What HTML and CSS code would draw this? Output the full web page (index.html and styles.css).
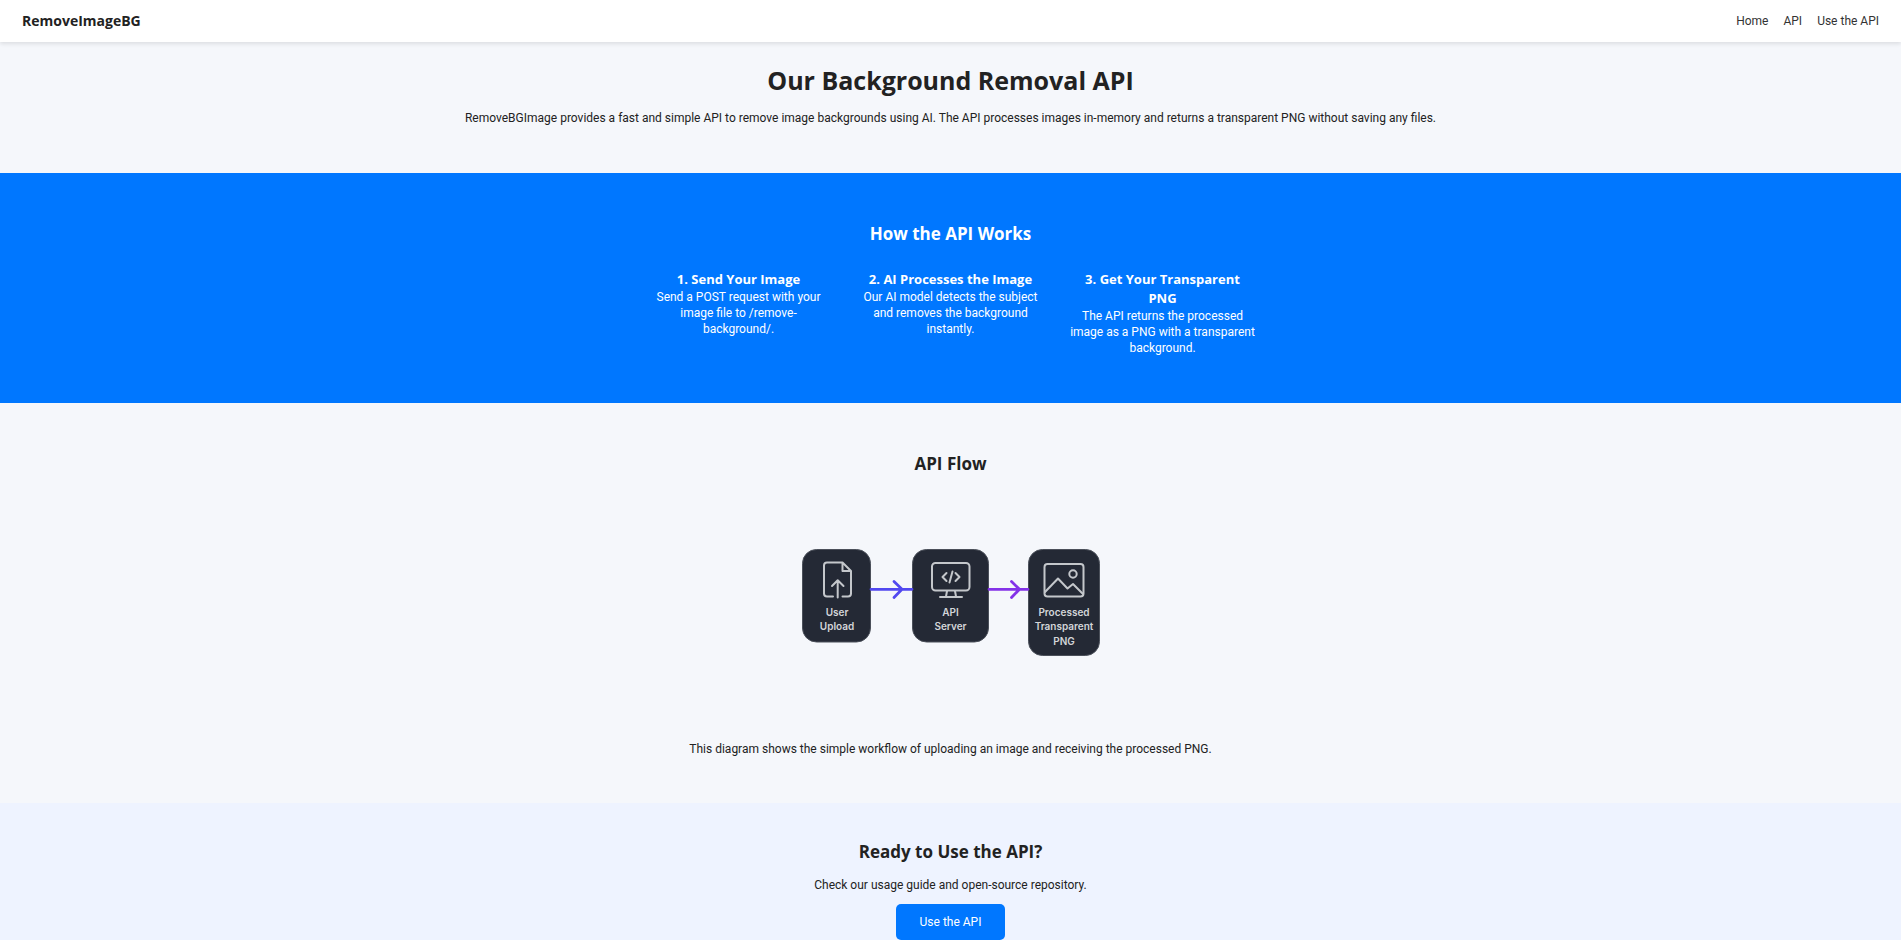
FILE: index.html
```html
<!DOCTYPE html>
<html lang="en">
<head>
<meta charset="utf-8">
<meta name="viewport" content="width=device-width, initial-scale=1">
<title>RemoveImageBG API</title>
<link rel="stylesheet" href="styles.css">
</head>
<body>
<header class="header">
  <div class="logo">RemoveImageBG</div>
  <nav class="nav">
    <a href="#">Home</a>
    <a href="#">API</a>
    <a href="#use">Use the API</a>
  </nav>
</header>
<main>
  <section class="hero">
    <h1>Our Background Removal API</h1>
    <p>RemoveBGImage provides a fast and simple API to remove image backgrounds using AI. The API processes images in-memory and returns a transparent PNG without saving any files.</p>
  </section>
  <section class="how">
    <h2>How the API Works</h2>
    <div class="steps">
      <div class="step">
        <h3>1. Send Your Image</h3>
        <p>Send a POST request with your image file to /remove-background/.</p>
      </div>
      <div class="step">
        <h3>2. AI Processes the Image</h3>
        <p>Our AI model detects the subject and removes the background instantly.</p>
      </div>
      <div class="step">
        <h3>3. Get Your Transparent PNG</h3>
        <p>The API returns the processed image as a PNG with a transparent background.</p>
      </div>
    </div>
  </section>
  <section class="flow">
    <h2>API Flow</h2>
    <svg class="diagram" viewBox="0 0 400 240" role="img" aria-label="API workflow diagram">
      <g class="box">
        <rect x="51.500" y="61.500" width="68" height="92.500" rx="14"/>
        <rect x="161.500" y="61.500" width="76" height="92.500" rx="14"/>
        <rect x="277.500" y="61.500" width="71" height="106" rx="14"/>
      </g>
      <g class="arrow arrow-blue">
        <path d="M120 101.300H161M143 93.500L151 101.300L143 109.500"/>
      </g>
      <g class="arrow arrow-purple">
        <path d="M238 101.300H277M260.500 93.500L268.500 101.300L260.500 109.500"/>
      </g>
      <g class="icon">
        <path d="M82 108.500H76Q73 108.500 73 105.500V77.500Q73 74.500 76 74.500H91.500L100 83V105.500Q100 108.500 97 108.500H91.500M91.500 74.500V83H100M86.700 109.500V92.500M81 98L86.700 92.200L92.500 98"/>
        <rect x="181" y="75" width="37.500" height="27.500" rx="3.500"/>
        <path d="M196 103L195 108.500M204 103L205 108.500M189 109H211M195.500 85L191.500 89L195.500 93M204.500 85L208.500 89L204.500 93M201.500 83.500L198.500 94.500"/>
        <rect x="293.500" y="76" width="39" height="32.500" rx="3"/>
        <circle cx="322" cy="86" r="3.700"/>
        <path d="M294 104L307 90.500L316.500 100.500L322 96L332 106"/>
      </g>
      <g class="label">
        <text x="86" y="128">User</text>
        <text x="86" y="142">Upload</text>
        <text x="199.500" y="128">API</text>
        <text x="199.500" y="142">Server</text>
        <text x="313" y="128">Processed</text>
        <text x="313" y="142">Transparent</text>
        <text x="313" y="157">PNG</text>
      </g>
    </svg>
    <p>This diagram shows the simple workflow of uploading an image and receiving the processed PNG.</p>
  </section>
  <section class="cta" id="use">
    <h2>Ready to Use the API?</h2>
    <p>Check our usage guide and open-source repository.</p>
    <a class="button" href="#">Use the API</a>
  </section>
</main>
</body>
</html>
```
FILE: styles.css
```css
* {
  box-sizing: border-box;
  margin: 0;
  padding: 0;
}

body {
  background: #f5f7fb;
  color: #222;
  font-family: "Segoe UI", Roboto, sans-serif;
  font-size: 12px;
  line-height: 16px;
  overflow: hidden;
}

.header {
  position: relative;
  display: flex;
  align-items: center;
  justify-content: space-between;
  padding: 13px 22px;
  background: #fff;
  box-shadow: 0 2px 4px rgba(0, 0, 0, 0.1);
}

.logo,
h1,
h2,
h3 {
  font-family: "Segoe UI", "Open Sans", sans-serif;
  font-weight: 700;
}

.logo {
  font-size: 14px;
}

.nav {
  display: flex;
  gap: 15px;
}

.nav a {
  color: #333;
  text-decoration: none;
}

section {
  text-align: center;
}

h1 {
  margin-bottom: 12px;
  font-size: 25px;
  line-height: 36px;
}

h2 {
  font-size: 17px;
  line-height: 24px;
}

h3 {
  font-size: 13px;
  line-height: 19px;
}

.hero {
  padding: 20px 20px 47px;
}

.how {
  padding: 49px 20px 47px;
  background: #07f;
  color: #fff;
}

.steps {
  display: flex;
  justify-content: center;
  gap: 26px;
  margin-top: 24px;
}

.step {
  width: 186px;
}

.flow {
  padding: 49px 20px 46px;
}

.diagram {
  display: block;
  width: 400px;
  max-width: 100%;
  margin: 12px auto 13px;
}

.box {
  fill: #242935;
  stroke: #4b505a;
}

.arrow {
  fill: none;
  stroke-width: 2.8;
  stroke-linecap: round;
  stroke-linejoin: round;
}

.arrow-blue {
  stroke: #5148f0;
}

.arrow-purple {
  stroke: #8432e8;
}

.icon {
  fill: none;
  stroke: #c4c7cb;
  stroke-width: 2;
  stroke-linecap: round;
  stroke-linejoin: round;
}

.label {
  fill: #d3d5d9;
  font-family: Inter, sans-serif;
  font-size: 10px;
  font-weight: 600;
  text-anchor: middle;
}

.cta {
  padding: 37px 20px 48px;
  background: #eef3ff;
}

.cta p {
  margin: 13px 0 11px;
}

.button {
  display: inline-block;
  padding: 10px 24px;
  border-radius: 5px;
  background: #07f;
  color: #fff;
  text-decoration: none;
}
```
